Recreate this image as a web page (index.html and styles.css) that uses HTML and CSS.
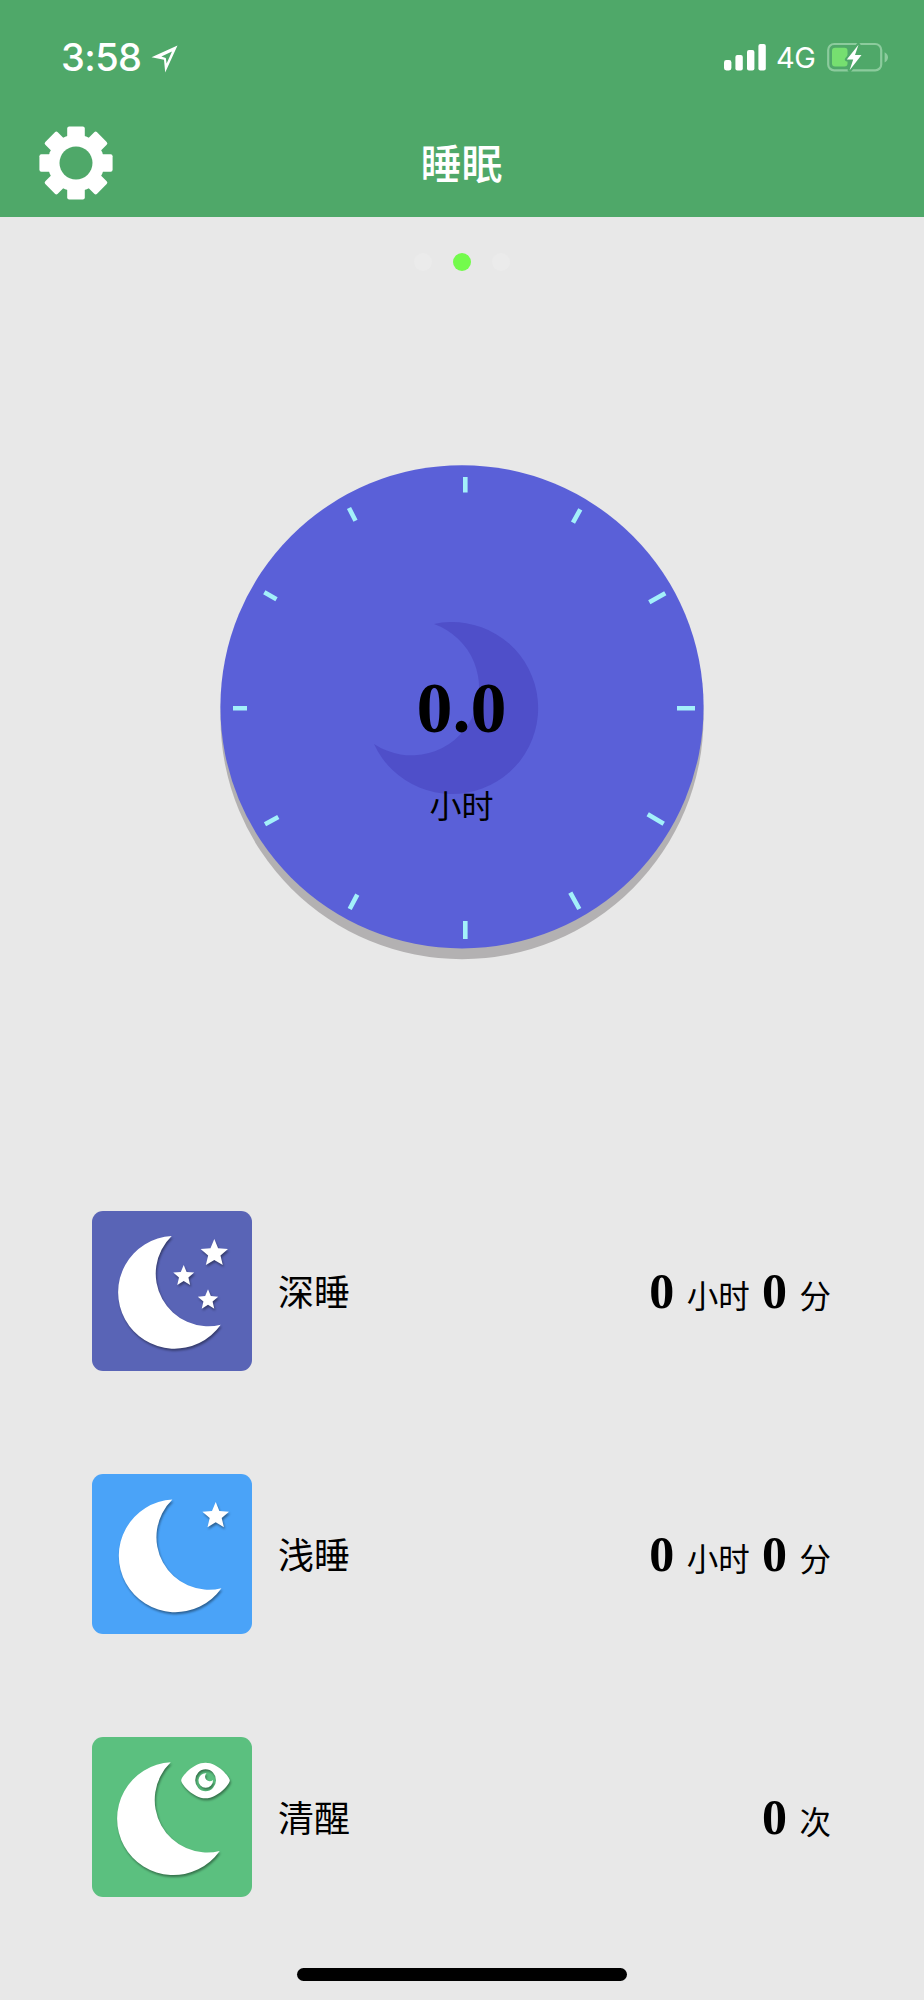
FILE: index.html
```html
<!DOCTYPE html>
<html lang="zh-CN">
<head>
<meta charset="utf-8">
<title>睡眠</title>
<link rel="stylesheet" href="styles.css">
</head>
<body>
<div class="screen">
  <header class="header">
    <div class="status">
      <div class="status-left">
        <span class="time">3:58</span>
        <svg class="location" width="28" height="30" viewBox="0 0 28 30"><path fill="#fff" fill-rule="evenodd" d="M26.5 1.5 L.5 13.2 L13 15.8 L14.2 28.4 Z M21 7.5 L15.6 19.4 L14.8 14 L10.4 12.4 Z"/></svg>
      </div>
      <div class="status-right">
        <svg width="42" height="27" viewBox="0 0 42 27" fill="#fff"><rect x="0" y="16" width="7.4" height="10.5" rx="2.4"/><rect x="11.4" y="11" width="7.4" height="15.5" rx="2"/><rect x="23" y="6" width="7.4" height="20.5" rx="2"/><rect x="34.4" y="0" width="7.4" height="26.5" rx="2"/></svg>
        <span class="network">4G</span>
        <svg class="battery" width="62" height="32" viewBox="0 0 62 32">
          <rect x="1.2" y="3" width="53" height="26.4" rx="6" fill="none" stroke="#8ccb9d" stroke-width="2.2"/>
          <rect x="5" y="6.8" width="15.5" height="18.8" rx="3" fill="#76df70"/>
          <path d="M57.6 11.2 Q61 13 61 16.2 Q61 19.6 57.6 21.4 Z" fill="#8ccb9d"/>
          <path d="M31.5 3.8 L19.8 18.4 H26.2 L22.6 29.2 L34.5 14 H28 Z" fill="#fff" stroke="#4fa869" stroke-width="4" stroke-linejoin="round"/>
          <path d="M31.5 3.8 L19.8 18.4 H26.2 L22.6 29.2 L34.5 14 H28 Z" fill="#fff"/>
        </svg>
      </div>
    </div>
    <div class="titlebar">
      <svg class="gear" width="74" height="74" viewBox="-37 -37 74 74">
        <g fill="#fff">
          <rect x="-8.8" y="-36.6" width="17.6" height="73.2" rx="2"/>
          <rect x="-8.8" y="-36.6" width="17.6" height="73.2" rx="2" transform="rotate(45)"/>
          <rect x="-8.8" y="-36.6" width="17.6" height="73.2" rx="2" transform="rotate(90)"/>
          <rect x="-8.8" y="-36.6" width="17.6" height="73.2" rx="2" transform="rotate(135)"/>
          <circle r="28.4"/>
        </g>
        <circle r="16.5" fill="#4fa869"/>
      </svg>
      <h1 class="title">睡眠</h1>
    </div>
  </header>
  <div class="pager"><i class="dot"></i><i class="dot active"></i><i class="dot"></i></div>
  <section class="clock">
    <svg class="face" width="484" height="495" viewBox="220 465 484 495">
      <circle cx="462" cy="717.7" r="241.5" fill="#b3b1b2"/>
      <circle cx="462" cy="706.8" r="241.6" fill="#5a60d8"/>
      <path d="M434 624 A86 86 0 1 1 374 744 A67.6 67.6 0 1 0 434 624 Z" fill="#4f4fc9"/>
      <path stroke="#a3f0fa" stroke-width="4.6" d="M465.3 477V492.5 M465.3 921V939 M233 708.3H247 M677 708.3H695 M349 508L355.5 520.7 M264.3 592.3L276.5 599.3 M580.3 509.3L573 522.7 M665.3 593.3L649.3 602.3 M278.3 816.9L265 824.2 M357.3 894.7L349.7 909 M647.7 814.3L663.7 823.7 M570.3 892.7L579.3 909"/>
    </svg>
    <div class="reading"><b class="hours">0.0</b><span class="unit">小时</span></div>
  </section>
  <main class="list">
    <div class="row">
      <svg class="icon deep" width="160" height="160" viewBox="0 0 160 160">
        <g class="shape">
          <path d="M79.7 25 A56.4 56.4 0 1 0 128.7 113.7 A52.5 52.5 0 0 1 79.7 25 Z"/>
          <path transform="translate(122.3 42.4) scale(14.4)" d="M0-1L.265-.364L.951-.309L.428.139L.588.809L0 .45L-.588.809L-.428.139L-.951-.309L-.265-.364Z"/>
          <path transform="translate(91.7 65) scale(11)" d="M0-1L.265-.364L.951-.309L.428.139L.588.809L0 .45L-.588.809L-.428.139L-.951-.309L-.265-.364Z"/>
          <path transform="translate(116 89) scale(10.7)" d="M0-1L.265-.364L.951-.309L.428.139L.588.809L0 .45L-.588.809L-.428.139L-.951-.309L-.265-.364Z"/>
        </g>
      </svg>
      <span class="label">深睡</span>
      <span class="value"><b>0</b> 小时 <b>0</b> 分</span>
    </div>
    <div class="row">
      <svg class="icon light" width="160" height="160" viewBox="0 0 160 160">
        <g class="shape">
          <path transform="translate(.7 .5)" d="M79.7 25 A56.4 56.4 0 1 0 128.7 113.7 A52.5 52.5 0 0 1 79.7 25 Z"/>
          <path transform="translate(123.7 42) scale(14)" d="M0-1L.265-.364L.951-.309L.428.139L.588.809L0 .45L-.588.809L-.428.139L-.951-.309L-.265-.364Z"/>
        </g>
      </svg>
      <span class="label">浅睡</span>
      <span class="value"><b>0</b> 小时 <b>0</b> 分</span>
    </div>
    <div class="row">
      <svg class="icon awake" width="160" height="160" viewBox="0 0 160 160">
        <g class="shape">
          <path transform="translate(-1 .3)" d="M79.7 25 A56.4 56.4 0 1 0 128.7 113.7 A52.5 52.5 0 0 1 79.7 25 Z"/>
          <path fill-rule="evenodd" d="M89.2 43.5 C89.2 40 101 25.7 113.5 25.7 C126 25.7 137.8 40 137.8 43.5 C137.8 47 126 61.3 113.5 61.3 C101 61.3 89.2 47 89.2 43.5 Z M103.2 43.3 a10.4 11 0 1 0 20.8 0 a10.4 11 0 1 0 -20.8 0 Z"/>
          <path d="M114.5 36.2 A7.3 7.3 0 1 0 121 43 A3.6 3.6 0 1 1 114.5 36.2 Z"/>
        </g>
      </svg>
      <span class="label">清醒</span>
      <span class="value"><b>0</b> 次</span>
    </div>
  </main>
  <div class="home"></div>
</div>
</body>
</html>
```
FILE: styles.css
```css
* { box-sizing: border-box; }
body { margin: 0; background: #e8e8e8; color: #000; font-family: "Liberation Sans", "Noto Sans CJK SC", sans-serif; }
svg { display: block; }
.screen { width: 924px; height: 2000px; overflow: hidden; display: flex; flex-direction: column; align-items: center; background: #e8e8e8; }
.header { width: 924px; height: 217px; background: #4fa869; color: #fff; flex: none; }
.status { height: 114px; padding: 0 35px 0 61px; display: flex; justify-content: space-between; align-items: center; }
.status-left, .status-right { display: flex; align-items: center; }
.time { font: 500 38px/44px Inter, sans-serif; width: 90px; white-space: nowrap; letter-spacing: -0.6px; }
.location { margin-top: 3px; }
.network { font: 400 29px/34px Inter, sans-serif; width: 51px; margin-left: 10px; margin-top: 2px; letter-spacing: -0.5px; }
.titlebar { height: 98px; padding: 0 40px 0 39px; display: grid; grid-template-columns: 74px 1fr 74px; align-items: center; }
.title { margin: 0; padding-bottom: 5px; text-align: center; font: 500 41px/60px "Noto Sans CJK SC", sans-serif; }
.pager { margin-top: 36px; display: flex; gap: 21px; height: 18px; }
.dot { width: 18px; height: 18px; border-radius: 50%; background: #ebebeb; }
.dot.active { background: #73fb4c; }
.clock { margin-top: 194px; display: grid; width: 484px; height: 495px; flex: none; }
.face, .reading { grid-area: 1 / 1; }
.reading { display: flex; flex-direction: column; align-items: center; padding: 201px 1px 0 0; }
.hours { font: 700 72px/84px "Liberation Serif", serif; }
.unit { font: 400 32px/46px "Noto Sans CJK SC", sans-serif; margin-top: 31px; }
.list { margin-top: 251px; width: 740px; display: flex; flex-direction: column; gap: 103px; }
.row { height: 160px; display: flex; align-items: center; }
.icon { border-radius: 11px; }
.deep { background: #5964b6; }
.light { background: #4aa3f8; }
.awake { background: #5bc07f; }
.shape { fill: #fff; filter: drop-shadow(1.5px 2px 1px rgba(0, 0, 0, .4)); }
.label { margin-left: 26px; padding-bottom: 3px; font: 400 36px/52px "Noto Sans CJK SC", sans-serif; }
.value { margin-left: auto; padding: 7px 1px 0 0; font: 400 31.5px/60px "Liberation Serif", "Noto Sans CJK SC", serif; word-spacing: 4.5px; }
.value b { font: 700 50px/60px "Liberation Serif", serif; }
.home { margin-top: 71px; width: 330px; height: 13px; border-radius: 7px; background: #000; flex: none; }
```
